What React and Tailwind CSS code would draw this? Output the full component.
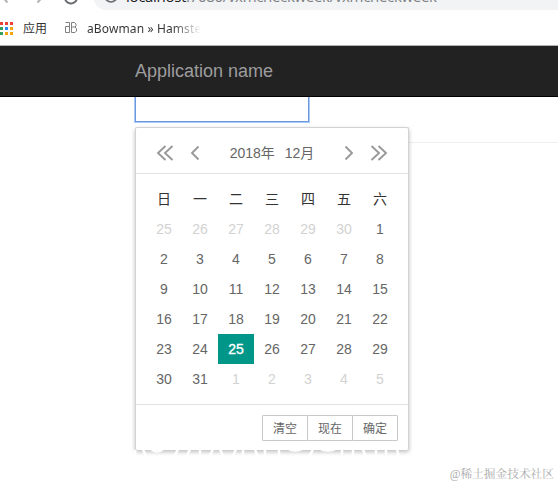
const SANS = "font-['Liberation_Sans','Noto_Sans_CJK_SC',sans-serif]";

const APP_DOTS = [
  "bg-[#ea4335]", "bg-[#ea4335]", "bg-[#ea4335]",
  "bg-[#34a05a]", "bg-[#2a8cf0]", "bg-[#f4a40c]",
  "bg-[#34a05a]", "bg-[#f4a40c]", "bg-[#f4a40c]",
];

const WEEKDAYS = ["日", "一", "二", "三", "四", "五", "六"];

const DAYS = [
  ...[25, 26, 27, 28, 29, 30].map((day) => ({ day, outside: true })),
  ...Array.from({ length: 31 }, (_, i) => ({ day: i + 1, selected: i === 24 })),
  ...[1, 2, 3, 4, 5].map((day) => ({ day, outside: true })),
];

function BrowserChrome() {
  return (
    <header className="h-[46px] overflow-hidden border-b border-[#b0b0b0] bg-white">
      <div className="relative h-[10px]">
        <svg className="absolute left-0 top-0" width="90" height="10" fill="none" stroke="#b4b4b4" strokeWidth="2">
          <path d="M2.5 -3L7.5 2.5M42.5 -3L37.5 2.5" />
          <path d="M65 -3A6 6 0 0 0 77 -2" stroke="#686b6f" />
        </svg>
        <div className="absolute -top-[18px] left-[93px] h-[28px] w-[500px] rounded-l-full bg-[#f1f3f4]">
          <svg className="absolute left-[11px] top-[8px]" width="14" height="14" fill="none" stroke="#686b6f" strokeWidth="1.7">
            <circle cx="7" cy="6" r="6" />
          </svg>
          <span className="absolute left-[33px] top-[4px] whitespace-nowrap font-['Open_Sans',sans-serif] text-[15px] leading-[20px] tracking-[-0.31px] text-[#7d8084]">
            <span className="text-[#202124]">localhost</span>:7080/vxmcheckweek/vxmcheckweek
          </span>
        </div>
      </div>
      <div className="flex h-[36px] items-center font-['Noto_Sans','Noto_Sans_CJK_SC',sans-serif] text-[12px] text-[#333]">
        <div className="grid grid-cols-[repeat(3,3px)] gap-[2px]">
          {APP_DOTS.map((color, i) => (
            <i key={i} className={`size-[3px] ${color}`} />
          ))}
        </div>
        <span className="ml-[10px] w-[42px] pt-[2px]">应用</span>
        <svg width="12" height="12" fill="none" stroke="#808080" strokeWidth="1">
          <path d="M0.5 0.5H4.5V10.5H0.5V4.5H4.5M6.5 0.5V10.5H10L11.5 9V6.5L10 5L11 4V2L9.5 0.5H6.5M6.5 5H10" />
        </svg>
        <span className="ml-[10px] w-[114px] overflow-hidden whitespace-nowrap bg-linear-to-r from-[#333] from-75% to-transparent bg-clip-text pt-[2px] tracking-[0.12px] text-transparent">
          aBowman » Hamste
        </span>
      </div>
    </header>
  );
}

function Chevron({ direction, double = false }) {
  const flip = direction === "right" ? "-scale-x-100" : "";
  return (
    <svg className={flip} width={double ? 18 : 10} height="16" fill="none" stroke="#999" strokeWidth="1.9">
      <path d={double ? "M9.5 1L2 8L9.5 15M16.5 1L9 8L16.5 15" : "M8.5 1.5L2 8L8.5 14.5"} />
    </svg>
  );
}

/* Uneven white flecks that break up the panel's lower shadow. */
function ShadowFlecks() {
  return (
    <svg className="absolute -left-[5px] top-[321px]" width="288" height="10" fill="none" stroke="white" strokeWidth="2.5">
      <path d="M4 1V10M12 0L15 8M20 0Q26 5 32 0M43 9L47 0M55 9L59 0M69 0V9M78 9L82 0M89 0L93 9M101 9L105 0M112 0V9M124 0L127 9M134 9V0M148 0V9M158 0Q165 3 171 0M178 9L182 0M190 0Q197 3 204 0M211 0V9M222 9V0M232 0L235 9M245 0V9M255 9V0M266 0L268 9" />
    </svg>
  );
}

function DatePicker() {
  return (
    <section className="absolute left-[135px] top-[127px] h-[323px] w-[274px] rounded-[2px] border border-b-0 border-[#d2d2d2] bg-white shadow-[0_2px_4px_rgba(0,0,0,0.26)]">
      <div className="flex h-[46px] items-center border-b border-[#e2e2e2] px-[20px] pt-[5px]">
        <Chevron direction="left" double />
        <div className="ml-[16px]"><Chevron direction="left" /></div>
        <div className="flex flex-1 justify-center gap-[10px] text-[14px] text-[#666]">
          <span>2018年</span>
          <span>12月</span>
        </div>
        <div className="mr-[16px]"><Chevron direction="right" /></div>
        <Chevron direction="right" double />
      </div>
      <div className="grid h-[230px] grid-cols-[repeat(7,36px)] auto-rows-[30px] content-start pl-[10px] pt-[10px] text-center text-[14px] leading-[30px] text-[#666]">
        {WEEKDAYS.map((name) => (
          <span key={name} className="text-[#333]">{name}</span>
        ))}
        {DAYS.map(({ day, outside, selected }, i) => (
          <span
            key={i}
            className={selected ? "bg-[#009688] text-white [-webkit-text-stroke:0.35px_white]" : outside ? "text-[#d2d2d2]" : ""}
          >
            {day}
          </span>
        ))}
      </div>
      <div className="flex justify-end border-t border-[#e2e2e2] pr-[10px] pt-[10px] text-[12px] text-[#666]">
        {["清空", "现在", "确定"].map((label) => (
          <button key={label} className="-ml-px h-[26px] w-[46px] rounded-[1px] border border-[#c9c9c9] pt-px leading-[24px]">
            {label}
          </button>
        ))}
      </div>
      <ShadowFlecks />
    </section>
  );
}

export default function App() {
  return (
    <div className={`relative h-[485px] w-[558px] overflow-hidden bg-white ${SANS}`}>
      <BrowserChrome />
      <nav className="h-[51px] border-b border-black bg-[#222] pl-[135px] text-[18px] leading-[50px] text-[#9d9d9d]">
        Application name
      </nav>
      <main className="ml-[135px] h-[46px] border-b border-[#eee]">
        <div className="h-[25px] w-[174px] border border-t-0 border-[#6c98dc] bg-white shadow-[0_0_0_1px_#a9c8fb] [clip-path:inset(0_-1px_-1px_-1px)]" />
      </main>
      <DatePicker />
      <footer className="absolute right-[4px] top-[466px] font-['Liberation_Serif','Noto_Serif_CJK_SC','Noto_Sans_CJK_SC',serif] text-[11.7px] leading-[17px] text-[#aaa]">
        @稀土掘金技术社区
      </footer>
    </div>
  );
}
